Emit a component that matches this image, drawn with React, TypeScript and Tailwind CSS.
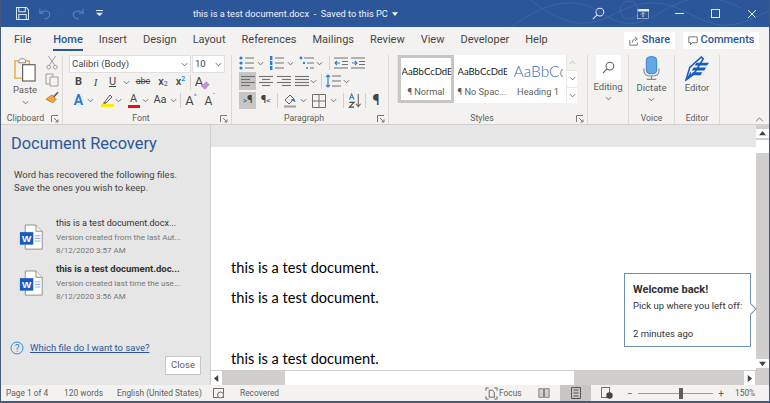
import type { ReactNode } from "react";

const ui = "font-['Roboto','Noto_Sans',sans-serif]";

const Chev = ({ className = "" }: { className?: string }) => (
    <svg viewBox="0 0 8 5" className={`w-[7px] h-[5px] shrink-0 ${className}`} fill="none" stroke="#605e5c" strokeWidth="1">
        <path d="M1 1l3 3 3-3" />
    </svg>
);

const Arrow = ({ d }: { d: string }) => (
    <svg viewBox="0 0 8 8" className="w-[7px] h-[7px]" fill="#444">
        <path d={d} />
    </svg>
);

const Lines = ({ rows, blue = false }: { rows: [number, number][]; blue?: boolean }) => (
    <svg viewBox="0 0 14 12" className="w-[14px] h-[12px]" stroke={blue ? "#2b7cd3" : "#707070"} strokeWidth="1.1">
        {rows.map(([a, b], i) => (
            <path key={i} d={`M${a} ${1.5 + i * 3}H${b}`} />
        ))}
    </svg>
);

const Bullets = ({ kind }: { kind: "dot" | "num" | "multi" }) => (
    <svg viewBox="0 0 16 14" className="w-[16px] h-[14px]">
        {kind === "dot" &&
            [2, 7, 12].map((y) => <circle key={y} cx="2" cy={y} r="1.6" fill="#2b7cd3" />)}
        {kind === "num" &&
            [2, 7, 12].map((y) => <rect key={y} x="1" y={y - 2} width="2.4" height="4" fill="#2b7cd3" />)}
        {kind === "multi" && (
            <>
                <circle cx="2" cy="2" r="1.4" fill="#2b7cd3" />
                <circle cx="5" cy="7" r="1.2" fill="#2b7cd3" />
                <circle cx="8" cy="12" r="1" fill="#2b7cd3" />
            </>
        )}
        <path
            d={kind === "multi" ? "M5 2H15M8 7H15M11 12H15" : "M6 2H15M6 7H15M6 12H15"}
            stroke="#707070"
            strokeWidth="1.1"
        />
    </svg>
);

const Indent = ({ flip }: { flip?: boolean }) => (
    <svg viewBox="0 0 14 12" className="w-[14px] h-[12px]" fill="none">
        <path d="M0 1H14M8 4.5H14M8 7.5H14M0 11H14" stroke="#707070" />
        {flip ? (
            <path d="M1 6H6M4 4l2 2-2 2" stroke="#2b7cd3" strokeWidth="1.1" />
        ) : (
            <path d="M6 6H1M3 4L1 6l2 2" stroke="#2b7cd3" strokeWidth="1.1" />
        )}
    </svg>
);

const Word = () => (
    <svg viewBox="0 0 28 30" className="w-[25px] h-[27px] shrink-0">
        <path d="M7 1H19L26 8V28H7Z" fill="#fff" stroke="#8a8886" />
        <path d="M19 1V8H26" fill="#f3f2f1" stroke="#8a8886" />
        <path d="M18 13h6M18 16h6M18 19h6" stroke="#8fb4df" strokeWidth="1.2" />
        <rect x="1" y="9" width="15" height="14" fill="#185abd" />
        <text x="8.5" y="20" textAnchor="middle" fontSize="11" fontWeight="700" fill="#fff" fontFamily="Liberation Sans">
            W
        </text>
    </svg>
);

const Group = ({ label, className, launcher, children }: { label: string; className: string; launcher?: boolean; children: ReactNode }) => (
    <div className={`relative flex flex-col shrink-0 border-r border-[#dcdad8] ${className}`}>
        <div className="flex-1 min-h-0">{children}</div>
        <div className={`h-[11px] text-center text-[8.75px] leading-[11px] text-[#605e5c] ${launcher ? "pr-[12px]" : ""}`}>{label}</div>
        {launcher && (
            <svg viewBox="0 0 8 8" className="absolute right-[3px] bottom-[1px] w-[8px] h-[8px]" fill="none" stroke="#777">
                <path d="M.5 7V.5H7M3 3l4 4M4.5 7H7V4.5" />
            </svg>
        )}
    </div>
);

const Tbt = ({ className = "", children }: { className?: string; children: ReactNode }) => (
    <div className={`flex items-center justify-center h-full shrink-0 ${className}`}>{children}</div>
);

const Style = ({ sample, label, active, big }: { sample: string; label: string; active?: boolean; big?: boolean }) => (
    <div className={`flex flex-col items-center overflow-hidden bg-white shrink-0 w-[56px] ${active ? "border-[3px] border-[#c8c6c4]" : "border-[3px] border-white"}`}>
        <div className={`h-[28px] w-[49px] overflow-hidden whitespace-nowrap font-['Lato',sans-serif] ${big ? "text-[15.5px] font-light leading-[26px] text-[#3f6bb5]" : "text-[9.5px] leading-[28px] text-[#222]"}`}>
            {sample}
        </div>
        <div className="text-[9.25px] leading-[16px] whitespace-nowrap text-[#605e5c]">{label}</div>
    </div>
);

const Swirl = () => (
    <svg viewBox="0 0 260 27" className="absolute left-[510px] top-0 w-[260px] h-[27px]" fill="none" stroke="#3f6aa8" strokeWidth="0.8">
        <path d="M0 27C30 5 60 -5 85 10S120 30 150 12 200 -6 230 8" />
        <path d="M20 0C45 20 70 30 95 18S140 -6 175 12 220 30 260 10" />
        <circle cx="118" cy="10" r="9" />
    </svg>
);

const Recovery = ({ name, note, date, bold }: { name: string; note: string; date: string; bold?: boolean }) => (
    <div className="flex items-center gap-[12px] h-[46px] pl-[18px]">
        <Word />
        <div className="min-w-0 leading-[14px]">
            <div className={`whitespace-nowrap text-[#333] ${bold ? "text-[9.5px] font-bold" : "text-[9px]"}`}>{name}</div>
            <div className="text-[8.1px] text-[#777] whitespace-nowrap">{note}</div>
            <div className="text-[8px] text-[#777] whitespace-nowrap">{date}</div>
        </div>
    </div>
);

const tabs = ["Insert", "Design", "Layout", "References", "Mailings", "Review", "View", "Developer", "Help"];

export default function App() {
    return (
        <div className={`${ui} relative flex flex-col w-[770px] h-[403px] overflow-hidden border-x border-b-[2px] border-[#44597c] bg-[#f3f2f1]`}>
            {/* title bar */}
            <div className="relative flex items-center h-[27px] shrink-0 bg-[#2b579a] text-white">
                <Swirl />
                <svg viewBox="0 0 14 14" className="ml-[15px] w-[13px] h-[13px]" fill="none" stroke="#dfe7f3" strokeWidth="1.1">
                    <path d="M.5.5H11L13.5 3V13.5H.5ZM3 .5V5H10V.5M3 13.5V8H11V13.5" />
                </svg>
                <svg viewBox="0 0 14 14" className="ml-[10px] w-[12px] h-[12px]" fill="none" stroke="#5f83ba" strokeWidth="1.2">
                    <path d="M1 1V6H6M1.5 5.5C5 2 13 3 12.5 8.5 12 12 8 13 6 12.5" />
                </svg>
                <Chev className="ml-[5px] opacity-30" />
                <svg viewBox="0 0 14 14" className="ml-[9px] w-[12px] h-[12px]" fill="none" stroke="#5f83ba" strokeWidth="1.2">
                    <path d="M13 1V6H8M12.5 5.5C9 2 1 3 1.5 8.5 2 12 6 13 8 12.5" />
                </svg>
                <svg viewBox="0 0 8 8" className="ml-[12px] w-[7px] h-[7px]" fill="#dfe7f3">
                    <path d="M0 0H8V1H0ZM0 3H8L4 7Z" />
                </svg>
                <div className="ml-[90px] text-[9.25px] whitespace-nowrap text-[#eef2f8]">
                    this is a test document.docx&nbsp; -&nbsp; Saved to this PC
                </div>
                <svg viewBox="0 0 8 5" className="ml-[4px] w-[6px] h-[4px]" fill="#fff">
                    <path d="M0 0H8L4 5Z" />
                </svg>
                <div className="ml-auto flex items-center pr-[12px]">
                    <svg viewBox="0 0 14 14" className="w-[13px] h-[13px]" fill="none" stroke="#e6ecf5" strokeWidth="1.1">
                        <circle cx="8.5" cy="5.5" r="4.2" />
                        <path d="M5.5 8.5L1 13" />
                    </svg>
                    <svg viewBox="0 0 12 10" className="ml-[32px] w-[12px] h-[10px]">
                        <rect x="0" y="0" width="12" height="10" fill="none" stroke="#e6ecf5" />
                        <rect x="0" y="0" width="12" height="2.5" fill="#e6ecf5" />
                        <path d="M6 8V4M4 5.5L6 3.5 8 5.5" stroke="#e6ecf5" />
                    </svg>
                    <div className="ml-[26px] w-[9px] h-px bg-[#e6ecf5]" />
                    <div className="ml-[27px] w-[9px] h-[9px] border border-[#e6ecf5]" />
                    <svg viewBox="0 0 10 10" className="ml-[27px] w-[10px] h-[10px]" stroke="#e6ecf5">
                        <path d="M1 1L9 9M9 1L1 9" />
                    </svg>
                </div>
            </div>

            {/* tabs */}
            <div className="flex items-center h-[25px] shrink-0 pt-[2px] pl-[13px] pr-[10px] text-[11px] text-[#484644]">
                <div className="mr-[22px]">File</div>
                <div className="relative mr-[16px] font-medium text-[#2b579a]">
                    Home
                    <div className="absolute left-0 right-0 -bottom-[2px] h-[2px] bg-[#2b579a]" />
                </div>
                <div className="flex gap-[16px]">
                    {tabs.map((t) => (
                        <div key={t}>{t}</div>
                    ))}
                </div>
                <div className="ml-auto flex items-center gap-[8px] text-[#2b579a] font-medium">
                    <div className="flex items-center justify-center gap-[3px] w-[51px] h-[17px] bg-white">
                        <svg viewBox="0 0 12 12" className="w-[10px] h-[10px]" fill="none" stroke="#605e5c">
                            <path d="M1 5V11H10V8M4 8C4 5 6 3.5 8 3.5M7 1l3 2.5-3 2.5" />
                        </svg>
                        Share
                    </div>
                    <div className="flex items-center justify-center gap-[3px] w-[76px] h-[17px] bg-white">
                        <svg viewBox="0 0 12 12" className="w-[10px] h-[10px]" fill="none" stroke="#605e5c">
                            <path d="M1 1H11V8H5L3 10.5V8H1Z" />
                        </svg>
                        Comments
                    </div>
                </div>
            </div>

            {/* ribbon */}
            <div className="flex h-[73px] shrink-0 pt-[3px] border-b border-[#d2d0ce] text-[#605e5c]">
                <Group label="Clipboard" launcher className="w-[62px]">
                    <div className="flex h-full pl-[10px]">
                        <div className="flex flex-col items-center w-[28px]">
                            <svg viewBox="0 0 24 26" className="w-[23px] h-[25px] mt-[2px]" fill="none">
                                <path d="M1 4H16V22H1Z" stroke="#e8a33d" strokeWidth="1.4" />
                                <path d="M5 4C5 1 12 1 12 4V6H5Z" fill="#fff" stroke="#8a8886" />
                                <rect x="9" y="8" width="13" height="17" fill="#fff" stroke="#605e5c" strokeWidth="1.2" />
                            </svg>
                            <div className="text-[9.5px] leading-[14px] mt-[1px]">Paste</div>
                            <Chev className="mt-[3px]" />
                        </div>
                        <div className="flex flex-col items-center gap-[3px] ml-[5px] w-[16px]">
                            <svg viewBox="0 0 12 16" className="w-[12px] h-[15px]" fill="none" stroke="#9a9896">
                                <path d="M2 1L9 11M10 1L3 11" />
                                <circle cx="2.5" cy="13" r="2" />
                                <circle cx="9.5" cy="13" r="2" />
                            </svg>
                            <svg viewBox="0 0 14 14" className="w-[14px] h-[14px]" fill="#f3f2f1" stroke="#a19f9d">
                                <path d="M1 1H8V11H1Z" />
                                <path d="M5 4H13V13H5Z" />
                            </svg>
                            <svg viewBox="0 0 16 14" className="w-[14px] h-[13px] mt-[1px]">
                                <path d="M1 9L8 4 13 9 9 13Z" fill="#f0a63c" stroke="#c77a1d" />
                                <path d="M10 6L15 1" stroke="#605e5c" strokeWidth="2" />
                            </svg>
                        </div>
                    </div>
                </Group>

                <Group label="Font" launcher className="w-[169px]">
                    <div className="pl-[6px] flex flex-col">
                        <div className="flex h-[18px] gap-px text-[9.5px] text-[#444]">
                            <div className="flex items-center justify-between w-[122px] bg-white pl-[2px] pr-[2px] border border-[#e1dfdd]">
                                Calibri (Body) <Chev />
                            </div>
                            <div className="flex items-center justify-between w-[33px] bg-white pl-[2px] pr-[2px] border border-[#e1dfdd]">
                                10 <Chev />
                            </div>
                        </div>
                        <div className="flex items-center h-[18px] text-[#484644] text-[11px]">
                            <Tbt className="w-[17px] ml-[1px] font-bold">B</Tbt>
                            <Tbt className="w-[17px] italic font-['Liberation_Serif',serif]">I</Tbt>
                            <Tbt className="w-[17px] underline">U</Tbt>
                            <Chev className="ml-[2px]" />
                            <Tbt className="w-[22px] ml-[2px] text-[9px] line-through">abc</Tbt>
                            <Tbt className="w-[18px] font-medium">
                                x<sub className="text-[7px] text-[#2b7cd3]">2</sub>
                            </Tbt>
                            <Tbt className="w-[17px] font-medium">
                                x<sup className="text-[7px] text-[#2b7cd3]">2</sup>
                            </Tbt>
                            <div className="w-px h-[15px] bg-[#d2d0ce] ml-[1px]" />
                            <Tbt className="w-[22px] text-[13px]">
                                A<span className="-ml-[1px] w-[7px] h-[5px] mt-[7px] bg-[#c78fd6] -rotate-45" />
                            </Tbt>
                        </div>
                        <div className="flex items-center h-[17px] mt-px text-[#484644]">
                            <Tbt className="w-[15px] ml-[2px] text-[14px] font-bold text-[#2b7cd3]">A</Tbt>
                            <Chev className="ml-[1px]" />
                            <div className="flex flex-col items-center ml-[6px] w-[14px]">
                                <svg viewBox="0 0 12 10" className="w-[12px] h-[10px]" fill="none" stroke="#605e5c">
                                    <path d="M3 9L9 1 11 3 5 9ZM2 9H5" />
                                </svg>
                                <div className="w-[13px] h-[3px] bg-[#ffea00]" />
                            </div>
                            <Chev className="ml-[1px]" />
                            <div className="flex flex-col items-center ml-[5px] w-[13px]">
                                <div className="text-[11px] leading-[12px]">A</div>
                                <div className="w-[12px] h-[3px] bg-[#e0101e]" />
                            </div>
                            <Chev className="ml-[2px]" />
                            <Tbt className="w-[20px] ml-[1px] text-[11px]">Aa</Tbt>
                            <Chev />
                            <div className="w-px h-[15px] bg-[#d2d0ce] ml-[3px]" />
                            <Tbt className="w-[20px] text-[13px]">
                                A<span className="text-[7px] text-[#2b7cd3] -mt-[6px]">^</span>
                            </Tbt>
                            <Tbt className="w-[18px] text-[12px]">
                                A<span className="text-[7px] text-[#2b7cd3] -mt-[6px]">ˇ</span>
                            </Tbt>
                        </div>
                    </div>
                </Group>

                <Group label="Paragraph" launcher className="w-[157px]">
                    <div className="pl-[7px] flex flex-col">
                        <div className="flex items-center h-[16px]">
                            <Tbt className="w-[16px]"><Bullets kind="dot" /></Tbt>
                            <Chev className="ml-[2px]" />
                            <Tbt className="w-[16px] ml-[5px]"><Bullets kind="num" /></Tbt>
                            <Chev className="ml-[2px]" />
                            <Tbt className="w-[16px] ml-[5px]"><Bullets kind="multi" /></Tbt>
                            <Chev className="ml-[1px]" />
                            <div className="w-px h-[14px] bg-[#d2d0ce] ml-[6px]" />
                            <Tbt className="w-[16px] ml-[3px]"><Indent /></Tbt>
                            <Tbt className="w-[16px] ml-px"><Indent flip /></Tbt>
                        </div>
                        <div className="flex items-center h-[18px] mt-px">
                            <Tbt className="w-[17px] bg-[#c8c6c4]"><Lines rows={[[0, 14], [0, 9], [0, 14], [0, 9]]} /></Tbt>
                            <Tbt className="w-[17px] ml-px"><Lines rows={[[0, 14], [3, 11], [0, 14], [3, 11]]} /></Tbt>
                            <Tbt className="w-[17px] ml-px"><Lines rows={[[0, 14], [5, 14], [0, 14], [5, 14]]} /></Tbt>
                            <Tbt className="w-[17px] ml-px"><Lines rows={[[0, 14], [0, 14], [0, 14], [0, 14]]} /></Tbt>
                            <Chev />
                            <div className="w-px h-[15px] bg-[#d2d0ce] ml-[4px]" />
                            <svg viewBox="0 0 16 14" className="w-[16px] h-[14px] ml-[3px]" fill="none">
                                <path d="M3 1V13M1 3l2-2 2 2M1 11l2 2 2-2" stroke="#2b7cd3" strokeWidth="1.2" />
                                <path d="M7 2H16M7 7H16M7 12H16" stroke="#707070" strokeWidth="1.2" />
                            </svg>
                            <Chev className="ml-[2px]" />
                        </div>
                        <div className="flex items-center h-[17px] mt-[2px] text-[11px] font-bold">
                            <Tbt className="w-[17px] bg-[#c8c6c4] text-[#444]">
                                <span className="text-[#2b7cd3] text-[8px]">&gt;</span>¶
                            </Tbt>
                            <Tbt className="w-[17px] ml-px text-[#444]">
                                ¶<span className="text-[#2b7cd3] text-[8px]">&lt;</span>
                            </Tbt>
                            <div className="w-px h-[15px] bg-[#d2d0ce] ml-[3px]" />
                            <svg viewBox="0 0 14 14" className="w-[14px] h-[14px] ml-[5px]" fill="none" stroke="#605e5c">
                                <path d="M2 6L7 1 11 5 6 10Z" />
                                <path d="M8 6l3 -1 1 3" fill="#2b7cd3" stroke="#2b7cd3" />
                                <path d="M1 12.5H13" stroke="#a19f9d" strokeWidth="2" />
                            </svg>
                            <Chev className="ml-[3px]" />
                            <svg viewBox="0 0 14 14" className="w-[14px] h-[14px] ml-[5px]" fill="none" stroke="#707070">
                                <path d="M.5.5H13.5V13.5H.5ZM7 .5V13.5M.5 7H13.5" />
                            </svg>
                            <Chev className="ml-[4px]" />
                            <div className="w-px h-[15px] bg-[#d2d0ce] ml-[6px]" />
                            <svg viewBox="0 0 14 16" className="w-[14px] h-[15px] ml-[4px]" fill="none">
                                <path d="M1 7L3.5 1 6 7M1.8 5H5.2" stroke="#2b7cd3" strokeWidth="1.1" />
                                <path d="M1 10H6L1 15H6" stroke="#484644" strokeWidth="1.2" />
                                <path d="M10.5 1V14M8 11.5l2.5 3 2.5-3" stroke="#605e5c" strokeWidth="1.1" />
                            </svg>
                            <div className="w-px h-[15px] bg-[#d2d0ce] ml-[3px]" />
                            <Tbt className="w-[20px] text-[14px] text-[#444]">¶</Tbt>
                        </div>
                    </div>
                </Group>

                <Group label="Styles" launcher className="w-[199px]">
                    <div className="flex pl-[8px]">
                        <div className="flex h-[48px] bg-[#e8e6e4] pl-px">
                            <Style sample="AaBbCcDdE" label="¶ Normal" active />
                            <Style sample="AaBbCcDdE" label="¶ No Spac..." />
                            <Style sample="AaBbCc" label="Heading 1" big />
                            <div className="flex flex-col w-[11px] gap-px pl-px">
                                <div className="flex flex-1 items-center justify-center bg-[#f3f2f1]"><Chev className="rotate-180 opacity-40" /></div>
                                <div className="flex flex-1 items-center justify-center bg-white"><Chev /></div>
                                <div className="flex flex-1 items-center justify-center bg-white"><Chev /></div>
                            </div>
                        </div>
                    </div>
                </Group>

                <Group label="" className="w-[41px]">
                    <div className="flex flex-col items-center">
                        <div className="flex items-center justify-center w-[25px] h-[25px] bg-white">
                            <svg viewBox="0 0 14 14" className="w-[13px] h-[13px]" fill="none" stroke="#605e5c" strokeWidth="1.1">
                                <circle cx="8.5" cy="5.5" r="4.2" />
                                <path d="M5.5 8.5L1 13" />
                            </svg>
                        </div>
                        <div className="text-[9.5px] leading-[14px]">Editing</div>
                        <Chev className="mt-[2px]" />
                    </div>
                </Group>

                <Group label="Voice" className="w-[46px]">
                    <div className="flex flex-col items-center">
                        <svg viewBox="0 0 18 26" className="w-[17px] h-[25px] mt-px" fill="none">
                            <rect x="3.5" y="0.5" width="11" height="18" rx="4" fill="#62a8e5" stroke="#2b7cd3" />
                            <path d="M1 13V15C1 20 4 21 9 21S17 20 17 15V13M9 21V24M4 24.5H14" stroke="#8a8886" strokeWidth="1.2" />
                        </svg>
                        <div className="text-[9.5px] leading-[14px]">Dictate</div>
                        <Chev className="mt-[2px]" />
                    </div>
                </Group>

                <Group label="Editor" className="w-[45px]">
                    <div className="flex flex-col items-center">
                        <svg viewBox="0 0 26 26" className="w-[25px] h-[25px] mt-px" fill="none">
                            <path d="M1 25L5 12 17 1 19 3 9 19Z" stroke="#185abd" strokeWidth="1.6" />
                            <path d="M1 25L7 21 6 16Z" fill="#185abd" />
                            <path d="M12 7H25L23 10H10ZM9 12H22L20 15H7ZM8 17H18L16 20H6Z" fill="#185abd" />
                        </svg>
                        <div className="text-[9.5px] leading-[14px]">Editor</div>
                    </div>
                </Group>

                <div className="flex flex-1 items-end justify-end pr-[5px] pb-[2px]">
                    <svg viewBox="0 0 10 6" className="w-[9px] h-[5px]" fill="none" stroke="#605e5c">
                        <path d="M1 5l4-4 4 4" />
                    </svg>
                </div>
            </div>

            {/* body */}
            <div className="relative flex flex-1 min-h-0 bg-[#e6e6e6]">
                <div className="flex flex-col w-[210px] shrink-0 border-r border-[#d2d0ce] pt-[7px]">
                    <div className="pl-[10px] text-[16.4px] leading-[24px] text-[#2b579a]">Document Recovery</div>
                    <div className="pl-[13px] mt-[12px] text-[9.5px] leading-[13px] text-[#444]">
                        Word has recovered the following files.
                        <br />
                        Save the ones you wish to keep.
                    </div>
                    <div className="mt-[20px]">
                        <Recovery name="this is a test document.docx..." note="Version created from the last Aut..." date="8/12/2020 3:57 AM" />
                        <Recovery name="this is a test document.doc..." note="Version created last time the use..." date="8/12/2020 3:56 AM" bold />
                    </div>
                    <div className="flex items-center gap-[6px] pl-[9px] mt-auto text-[9.5px] text-[#2b579a] underline">
                        <svg viewBox="0 0 14 14" className="w-[14px] h-[14px]" fill="none" stroke="#2b8fd3">
                            <circle cx="7" cy="7" r="6" />
                            <text x="7" y="10.5" textAnchor="middle" fontSize="10" fill="#2b8fd3" stroke="none">?</text>
                        </svg>
                        Which file do I want to save?
                    </div>
                    <div className="flex justify-end pr-[9px] pb-[10px] pt-px">
                        <div className="flex items-center justify-center w-[36px] h-[19px] bg-white border border-[#c8c6c4] text-[9.5px] text-[#605e5c]">Close</div>
                    </div>
                </div>

                <div className="flex flex-col flex-1 min-w-0">
                    <div className="flex flex-1 min-h-0">
                        <div className="flex flex-col flex-1 min-w-0">
                            <div className="h-[22px] shrink-0" />
                            <div className="flex-1 min-h-0 overflow-hidden bg-white pl-[20px] pt-[111px] font-['Lato',sans-serif] text-[14.6px] text-black">
                                <div className="leading-[20px]">this is a test document.</div>
                                <div className="mt-[10px] leading-[20px]">this is a test document.</div>
                                <div className="mt-[41px] leading-[20px]">this is a test document.</div>
                            </div>
                        </div>
                        <div className="flex flex-col w-[13px] shrink-0 pt-[4px] pb-[2px] bg-[#d0cfce]">
                            <div className="flex items-center justify-center h-[9px] bg-white">
                                <Arrow d="M4 1L8 6H0Z" />
                            </div>
                            <div className="h-[13px] mt-[2px] bg-white" />
                            <div className="flex items-center justify-center h-[9px] mt-auto bg-white">
                                <Arrow d="M4 7L8 2H0Z" />
                            </div>
                        </div>
                    </div>
                    <div className="flex h-[15px] shrink-0 pt-px pr-[14px] bg-[#d0cfce]">
                        <div className="flex items-center justify-center w-[11px] bg-white">
                            <Arrow d="M1 4L6 0V8Z" />
                        </div>
                        <div className="w-[289px] ml-[63px] bg-white" />
                        <div className="flex items-center justify-center w-[11px] ml-auto bg-white">
                            <Arrow d="M7 4L2 0V8Z" />
                        </div>
                    </div>
                </div>

                {/* welcome callout */}
                <div className="absolute left-[623px] top-[148px] w-[127px] h-[74px] bg-white border border-[#6f8fb8] pl-[8px] pt-[9px] text-[#333]">
                    <div className="text-[11px] leading-[14px] font-bold">Welcome back!</div>
                    <div className="text-[9.5px] leading-[14px] mt-[2px] whitespace-nowrap">Pick up where you left off:</div>
                    <div className="text-[9.5px] leading-[14px] mt-[14px]">2 minutes ago</div>
                    <div className="absolute -right-[5px] top-[31px] w-[8px] h-[8px] rotate-45 bg-white border-t border-r border-[#6f8fb8]" />
                </div>
            </div>

            {/* status bar */}
            <div className="flex items-center h-[16px] shrink-0 pl-[5px] text-[8.4px] whitespace-nowrap text-[#605e5c]">
                <div className="w-[58px] shrink-0">Page 1 of 4</div>
                <div className="w-[53px] shrink-0">120 words</div>
                <div className="w-[96px] shrink-0">English (United States)</div>
                <svg viewBox="0 0 12 12" className="w-[12px] h-[12px] shrink-0" fill="none" stroke="#707070">
                    <rect x="0.5" y="1.5" width="10" height="9" />
                    <circle cx="7.5" cy="8" r="3" fill="#f3f2f1" />
                </svg>
                <div className="ml-[15px] w-[45px] shrink-0">Recovered</div>
                <svg viewBox="0 0 14 14" className="ml-[200px] w-[13px] h-[13px] shrink-0" fill="none" stroke="#605e5c">
                    <path d="M1 4V1H4M10 1H13V4M13 10V13H10M4 13H1V10" />
                    <path d="M4.5 3.5H8L10 5.5V11H4.5Z" />
                </svg>
                <div className="ml-px w-[24px] shrink-0">Focus</div>
                <svg viewBox="0 0 14 12" className="ml-[15px] w-[12px] h-[12px] shrink-0" fill="#d2d0ce" stroke="#707070">
                    <path d="M1 1H6.5V11H1ZM7.5 1H13V11H7.5Z" />
                </svg>
                <div className="flex items-center justify-center ml-[10px] w-[31px] h-[16px] shrink-0 bg-[#c8c6c4]">
                    <svg viewBox="0 0 10 12" className="w-[10px] h-[12px]" fill="none" stroke="#555">
                        <path d="M.5.5H9.5V11.5H.5ZM2.5 3H7.5M2.5 6H7.5M2.5 9H7.5" />
                    </svg>
                </div>
                <svg viewBox="0 0 12 12" className="ml-[10px] w-[12px] h-[12px] shrink-0" fill="none" stroke="#707070">
                    <rect x="0.5" y="0.5" width="8" height="10" />
                    <circle cx="8.5" cy="8.5" r="3.2" fill="#444" stroke="none" />
                </svg>
                <div className="flex items-center ml-[14px] w-[97px] shrink-0 text-[10px]">
                    <span>−</span>
                    <div className="relative flex-1 mx-[5px] h-px bg-[#a19f9d]">
                        <div className="absolute left-[41px] -top-[5px] w-[4px] h-[11px] bg-[#605e5c]" />
                    </div>
                    <span>+</span>
                </div>
                <div className="ml-[11px] shrink-0">150%</div>
            </div>
        </div>
    );
}
